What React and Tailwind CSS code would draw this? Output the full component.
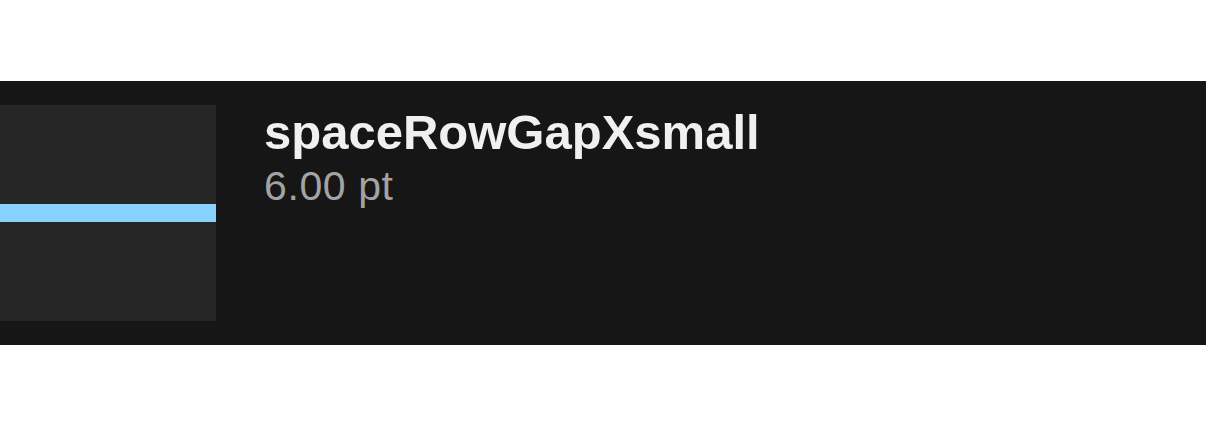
const TokenRow = ({ name, value }) => {
  return (
    <div className="flex items-start bg-[#161616] py-6">
      <div className="w-[216px] h-[216px] shrink-0 bg-[#262626] flex items-center">
        <div className="w-full h-[18px] bg-[#87d3fd]" />
      </div>
      <div className="ml-12 pt-[3px] flex flex-col">
        <div className="text-[49px] leading-[49px] font-bold text-[#f0f0f0]">{name}</div>
        <div className="mt-[9px] text-[41px] leading-[41px] tracking-[0.6px] text-[#a3a3a3]">{value}</div>
      </div>
    </div>
  );
};

export default function App() {
  return (
    <div className="w-[1206px] h-[426px] bg-white pt-[81px] font-['Liberation_Sans',Arial,sans-serif]">
      <TokenRow name="spaceRowGapXsmall" value="6.00 pt" />
    </div>
  );
}
